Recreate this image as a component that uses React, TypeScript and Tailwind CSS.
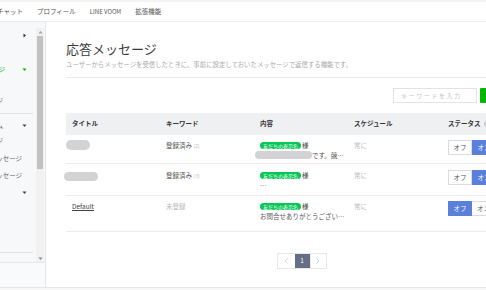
import React from 'react';

const Caret = ({ dir, color }: { dir: 'right' | 'down' | 'up'; color: string }) => (
    <svg width="5" height="5" viewBox="0 0 5 5" className="shrink-0">
        {dir === 'down' && <path d="M0.5 1.5 L4.5 1.5 L2.5 4 Z" fill={color} />}
        {dir === 'up' && <path d="M0.5 3.5 L4.5 3.5 L2.5 1 Z" fill={color} />}
        {dir === 'right' && <path d="M1.5 0.5 L4 2.5 L1.5 4.5 Z" fill={color} />}
    </svg>
);

const SideRow = ({
    label,
    clip,
    text,
    caret,
    className,
}: {
    label: string;
    clip: string;
    text: string;
    caret?: React.ReactNode;
    className: string;
}) => (
    <div className={`flex h-[14px] items-center pr-[9px] ${className}`}>
        <div className={`flex justify-end overflow-hidden whitespace-nowrap text-[6.5px] leading-[14px] ${clip} ${text}`}>
            <span>{label}</span>
        </div>
        <div className="flex-1" />
        {caret}
    </div>
);

const Toggle = ({ on }: { on: boolean }) => (
    <div className="flex h-[15px] text-[6.5px] leading-none">
        {on ? (
            <>
                <div className="flex w-[24px] items-center justify-center border border-[#dcdcdc] bg-white text-[#555]">オフ</div>
                <div className="flex w-[24px] items-center justify-center bg-[#5b80dc] text-white">オン</div>
            </>
        ) : (
            <>
                <div className="flex w-[24px] items-center justify-center bg-[#5b80dc] text-white">オフ</div>
                <div className="flex w-[24px] items-center justify-center border border-l-0 border-[#dcdcdc] bg-white text-[#555]">オン</div>
            </>
        )}
    </div>
);

const Tag = () => (
    <div className="flex h-[10px] items-center">
        <span className="flex h-[7px] items-center rounded-full bg-[#06c755] px-[3px] text-[5px] leading-none text-white">友だちの表示名</span>
        <span className="ml-[1px] text-[6.5px] text-[#444]">様</span>
    </div>
);

const App: React.FC = () => {
    return (
        <div className="flex h-[290px] w-[486px] flex-col overflow-hidden bg-white font-['Noto_Sans_CJK_JP',sans-serif]">
            {/* Top nav */}
            <nav className="flex h-[22px] shrink-0 items-center gap-[14px] border-t-2 border-b border-t-[#f4f4f4] border-b-[#ececec] pl-0 text-[6.5px] text-[#555]">
                <span className="-ml-[3px] whitespace-nowrap">チャット</span>
                <span className="whitespace-nowrap">プロフィール</span>
                <span className="whitespace-nowrap text-[6px]">LINE VOOM</span>
                <span className="whitespace-nowrap">拡張機能</span>
            </nav>

            <div className="flex h-[265px] shrink-0">
                {/* Sidebar */}
                <aside className="flex w-[46px] shrink-0 flex-col border-r border-[#e6e6e6] bg-[#f7f8fa]">
                    <div className="flex flex-1">
                        <div className="flex w-[36px] flex-col">
                            <SideRow label="ホーム" clip="w-0" text="text-[#555]" className="mt-[6px]" caret={<Caret dir="right" color="#333" />} />
                            <SideRow label="自動応答メッセージ" clip="w-[5px]" text="text-[#00b900]" className="mt-[20px]" caret={<Caret dir="down" color="#00b900" />} />
                            <SideRow label="応答メッセージ" clip="w-[3px]" text="text-[#666]" className="mt-[17px]" />
                            <div className="mt-[6px] mr-[3px] h-px bg-[#e3e3e3]" />
                            <SideRow label="メッセージアイテム" clip="w-[3px]" text="text-[#555]" className="mt-[4px]" caret={<Caret dir="down" color="#444" />} />
                            <SideRow label="リッチメッセージ" clip="w-[3px]" text="text-[#666]" className="mt-[1px]" />
                            <SideRow label="カードタイプメッセージ" clip="w-[22px]" text="text-[#666]" className="mt-[4px]" />
                            <SideRow label="リッチビデオメッセージ" clip="w-[22px]" text="text-[#666]" className="mt-[3px]" />
                            <SideRow label="分析" clip="w-0" text="text-[#555]" className="mt-[3px]" caret={<Caret dir="down" color="#444" />} />
                            <div className="mt-[53px] mr-[3px] h-px bg-[#e3e3e3]" />
                        </div>
                        {/* Scrollbar */}
                        <div className="mt-[6px] flex w-[8px] flex-col items-center bg-[#f1f1f1]">
                            <div className="flex h-[8px] items-center">
                                <Caret dir="up" color="#a3a3a3" />
                            </div>
                            <div className="h-[133px] w-[6px] bg-[#c1c1c1]" />
                            <div className="flex-1" />
                            <div className="flex h-[8px] items-center">
                                <Caret dir="down" color="#888" />
                            </div>
                        </div>
                        <div className="w-px" />
                    </div>
                    <div className="h-[25px] shrink-0 border-t border-[#e6e6e6] bg-[#f9fafb]" />
                </aside>

                {/* Main */}
                <main className="min-w-0 flex-1 overflow-hidden">
                    <div className="w-[511px] px-[20px] pt-[18px]">
                        <h1 className="text-[13px] leading-[18px] font-normal whitespace-nowrap text-[#3a3a3a]">応答メッセージ</h1>
                        <p className="mt-[2px] text-[6.4px] leading-[10px] whitespace-nowrap text-[#aaa]">
                            ユーザーからメッセージを受信したときに、事前に設定しておいたメッセージで返信する機能です。
                        </p>
                        <div className="mt-[7px] h-px bg-[#ebebeb]" />

                        <div className="mt-[10px] flex h-[15px] justify-end gap-[3px]">
                            <div className="flex w-[84px] items-center border border-[#e3e3e3] bg-white pl-[7px] text-[6px] tracking-[1.6px] whitespace-nowrap text-[#c5c5c5]">
                                キーワードを入力
                            </div>
                            <div className="w-[57px] rounded-[1px] bg-[#00b900]" />
                        </div>

                        {/* Table */}
                        <div className="mt-[10px]">
                            <div className="grid h-[22px] grid-cols-[94px_94px_94px_94px_95px] items-center bg-[#eff0f2] text-[6.5px] font-bold text-[#333]">
                                <div className="pl-[6px]">タイトル</div>
                                <div className="pl-[6px]">キーワード</div>
                                <div className="pl-[6px]">内容</div>
                                <div className="pl-[6px]">スケジュール</div>
                                <div className="flex items-center pl-[6px]">
                                    ステータス
                                    <span className="ml-[3px] flex h-[6px] w-[6px] items-center justify-center rounded-full border border-[#bbb] text-[4px] text-[#999]">?</span>
                                </div>
                            </div>

                            {/* Row 1 */}
                            <div className="grid h-[29px] grid-cols-[94px_94px_94px_94px_95px] items-start border-b border-[#ececec] pt-[5px] text-[6.5px] leading-[10px]">
                                <div>
                                    <div className="h-[10px] w-[24px] rounded-full bg-[#d3d3d3]" />
                                </div>
                                <div className="pl-[6px] text-[#555]">
                                    登録済み <span className="text-[5px] text-[#bbb]">(2)</span>
                                </div>
                                <div className="pl-[6px]">
                                    <Tag />
                                    <div className="flex h-[10px] items-center text-[#555]">
                                        <div className="-ml-[5px] h-[8px] w-[57px] rounded-full bg-[#d3d3d3]" />
                                        <span className="whitespace-nowrap">です。競…</span>
                                    </div>
                                </div>
                                <div className="pl-[6px] text-[#bbb]">常に</div>
                                <div className="pl-[6px]">
                                    <Toggle on />
                                </div>
                            </div>

                            {/* Row 2 */}
                            <div className="grid h-[32px] grid-cols-[94px_94px_94px_94px_95px] items-start border-b border-[#ececec] pt-[6px] text-[6.5px] leading-[10px]">
                                <div className="-ml-[2px] pt-[2px]">
                                    <div className="h-[9px] w-[34px] rounded-full bg-[#d3d3d3]" />
                                </div>
                                <div className="pl-[6px] text-[#555]">
                                    登録済み <span className="text-[5px] text-[#bbb]">(3)</span>
                                </div>
                                <div className="pl-[6px]">
                                    <Tag />
                                    <div className="h-[10px] text-[#555]">…</div>
                                </div>
                                <div className="pl-[6px] text-[#bbb]">常に</div>
                                <div className="pl-[6px]">
                                    <Toggle on />
                                </div>
                            </div>

                            {/* Row 3 */}
                            <div className="grid h-[36px] grid-cols-[94px_94px_94px_94px_95px] items-start border-b border-[#ececec] pt-[5px] text-[6.5px] leading-[10px]">
                                <div className="pl-[6px]">
                                    <span className="text-[#444] underline">Default</span>
                                </div>
                                <div className="pl-[6px] text-[#bbb]">未登録</div>
                                <div className="pl-[6px]">
                                    <Tag />
                                    <div className="h-[10px] whitespace-nowrap text-[#555]">お問合せありがとうござい…</div>
                                </div>
                                <div className="pl-[6px] text-[#bbb]">常に</div>
                                <div className="pl-[6px]">
                                    <Toggle on={false} />
                                </div>
                            </div>
                        </div>

                        {/* Pagination */}
                        <div className="mt-[21px] flex justify-center">
                            <div className="flex h-[16px] border border-[#e8e8e8] text-[6.5px]">
                                <div className="flex w-[17px] items-center justify-center text-[#ccc]">
                                    <svg width="4" height="6" viewBox="0 0 4 6"><path d="M3.5 0.5 L1 3 L3.5 5.5" fill="none" stroke="#ccc" strokeWidth="0.8" /></svg>
                                </div>
                                <div className="flex w-[15px] items-center justify-center bg-[#666d87] text-white">1</div>
                                <div className="flex w-[16px] items-center justify-center border-l border-[#e8e8e8]">
                                    <svg width="4" height="6" viewBox="0 0 4 6"><path d="M0.5 0.5 L3 3 L0.5 5.5" fill="none" stroke="#ccc" strokeWidth="0.8" /></svg>
                                </div>
                            </div>
                        </div>
                    </div>
                </main>
            </div>

            <div className="flex-1 border-t border-[#e6e6e6] bg-[#f7f7f7]" />
        </div>
    );
};

export default App;
